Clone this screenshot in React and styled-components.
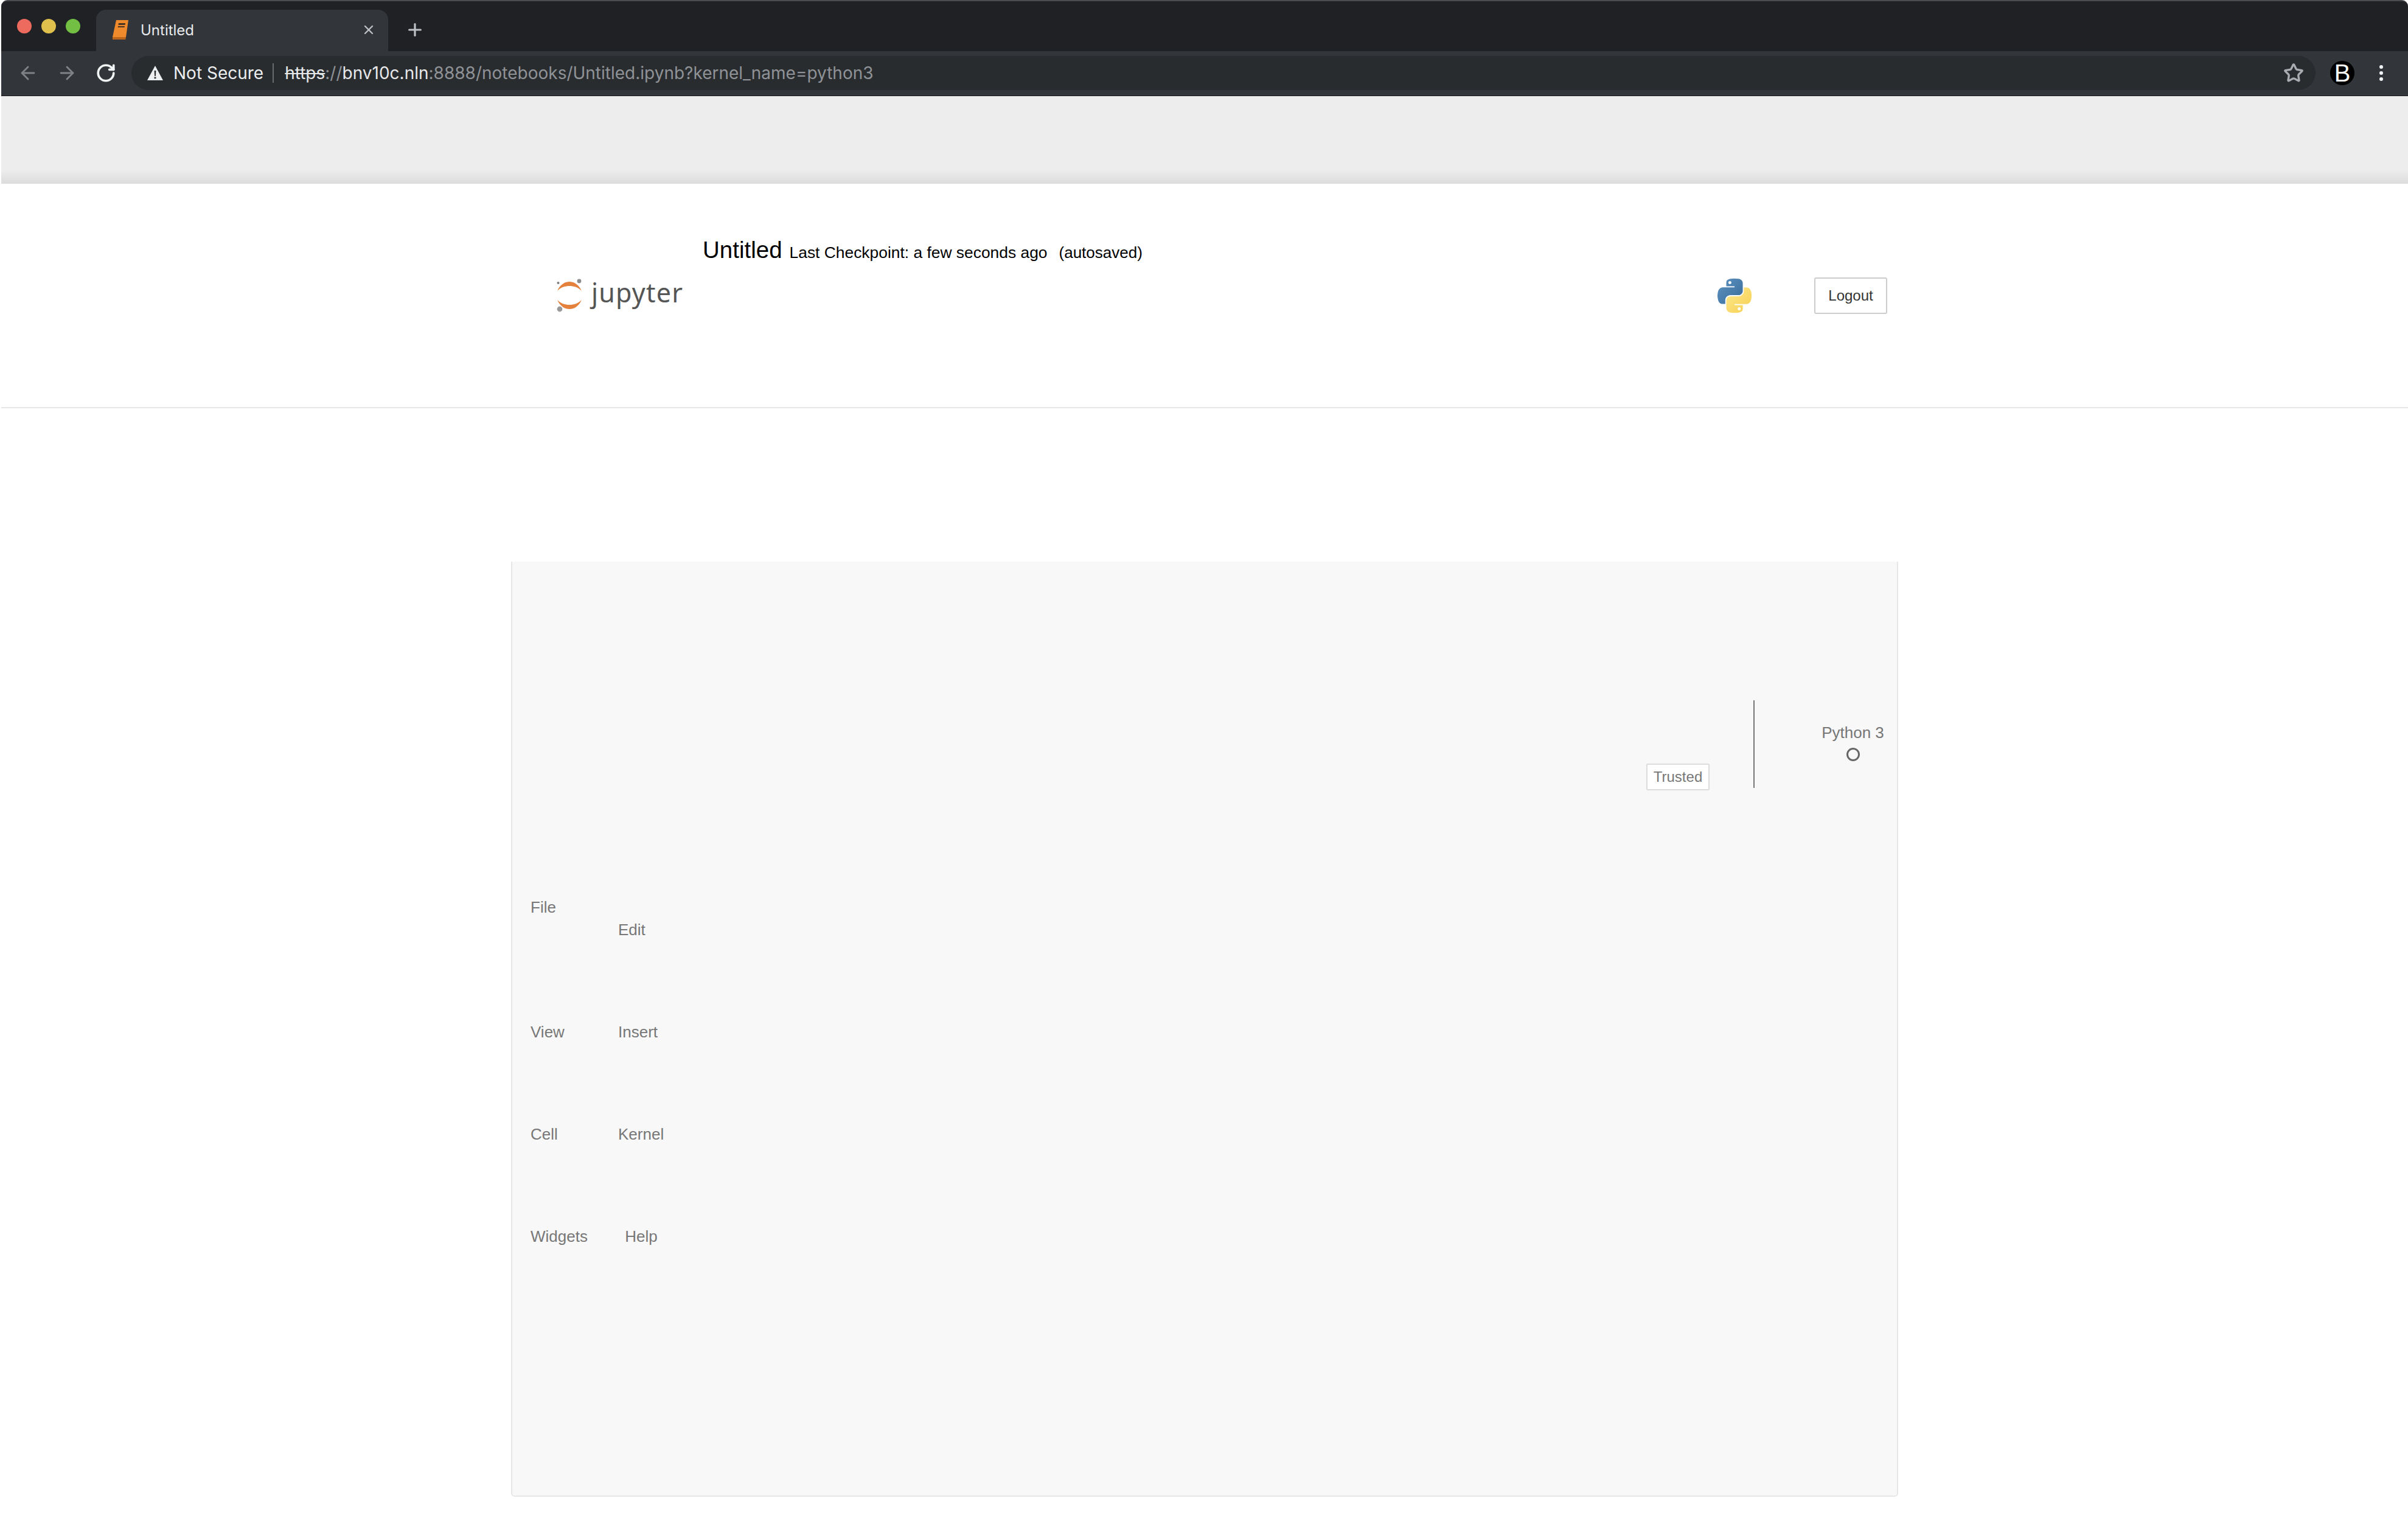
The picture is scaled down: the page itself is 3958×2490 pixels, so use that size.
import React from "react";
import styled, { createGlobalStyle } from "styled-components";
import { ArrowLeft, ArrowRight, Star, X, Plus, RotateCw } from "lucide-react";

const Global = createGlobalStyle`
  html, body { margin: 0; padding: 0; background: #fff; }
  body { font-family: "Liberation Sans", Arial, sans-serif; }
`;

const Page = styled.div`
  width: 3958px;
  height: 2490px;
  padding-left: 2px;
  box-sizing: border-box;
  background: #fff;
  overflow: hidden;
`;

const TabStrip = styled.div`
  height: 84px;
  box-sizing: border-box;
  background: #202124;
  border-top: 2px solid #4b4c4e;
  border-top-left-radius: 10px;
  border-top-right-radius: 10px;
  display: flex;
  align-items: flex-end;
  padding-left: 26px;
`;

const Lights = styled.div`
  display: flex;
  gap: 16px;
  align-self: flex-start;
  margin-top: 29px;
`;

const Light = styled.span`
  width: 24px;
  height: 24px;
  border-radius: 50%;
  background: ${(p) => p.$c};
`;

const Tab = styled.div`
  width: 480px;
  height: 68px;
  box-sizing: border-box;
  margin-left: 26px;
  background: #32363a;
  border-radius: 16px 16px 0 0;
  display: flex;
  align-items: center;
  padding: 0 20px 2px 26px;
  color: #e8eaed;
  font-family: Inter, "Liberation Sans", sans-serif;
  font-size: 24px;
`;

const TabTitle = styled.span`
  flex: 1;
  margin-left: 19px;
`;

const NewTab = styled.div`
  margin-left: 28px;
  height: 68px;
  display: flex;
  align-items: center;
  color: #bdc1c6;
  padding-bottom: 2px;
  box-sizing: border-box;
`;

const Toolbar = styled.div`
  height: 74px;
  box-sizing: border-box;
  background: #32363a;
  border-bottom: 1px solid #16171a;
  display: flex;
  align-items: center;
  padding: 0 41px 1px 27px;
`;

const NavIcons = styled.div`
  display: flex;
  align-items: center;
  gap: 30px;
`;

const NavIcon = styled.span`
  display: flex;
  color: ${(p) => p.$c};
`;

const Omnibox = styled.div`
  margin-left: 25px;
  flex: 1;
  height: 56px;
  margin-right: 24px;
  border-radius: 28px;
  background: #292c2f;
  display: flex;
  align-items: center;
  padding: 0 19px 0 26px;
  font-family: Inter, "Liberation Sans", sans-serif;
  font-size: 28px;
  color: #8f9296;
  white-space: nowrap;
`;

const NotSecure = styled.span`
  margin-left: 17px;
  color: #eceef0;
`;

const Sep = styled.span`
  width: 2px;
  height: 32px;
  background: #6a6d70;
  margin: 0 18px 0 15px;
`;

const Scheme = styled.span`
  color: #e6e8ea;
  text-decoration: line-through;
`;

const Host = styled.span`
  color: #e6e8ea;
`;

const Spacer = styled.span`
  flex: 1;
`;

const Avatar = styled.div`
  width: 40px;
  height: 40px;
  border-radius: 50%;
  background: #000;
  color: #fff;
  font-size: 40px;
  line-height: 40px;
  text-align: center;
  font-family: "Liberation Sans", sans-serif;
`;

const Dots = styled.div`
  margin-left: 41px;
  display: flex;
  flex-direction: column;
  gap: 4px;
`;

const Dot = styled.span`
  width: 6px;
  height: 6px;
  border-radius: 50%;
  background: #f1f3f4;
`;

const Banner = styled.div`
  height: 144px;
  background: linear-gradient(to bottom, #ededed 0, #ededed 84%, #dcdcdc 100%);
`;

const Header = styled.header`
  height: 369px;
  box-sizing: border-box;
  border-bottom: 2px solid #e7e7e7;
  padding: 89px 0 0 912px;
`;

const TitleRow = styled.div`
  display: flex;
  align-items: baseline;
  padding-left: 241px;
  height: 65px;
  color: #000;
  white-space: nowrap;
`;

const NotebookName = styled.span`
  font-size: 38.5px;
  line-height: 40px;
`;

const Checkpoint = styled.span`
  font-size: 26.4px;
  margin-left: 12px;
`;

const Autosaved = styled.span`
  font-size: 26px;
  margin-left: 19px;
`;

const BrandRow = styled.div`
  display: flex;
  align-items: center;
  width: 2188px;
  height: 60px;
`;

const Logo = styled.div`
  display: flex;
  align-items: center;
  flex: 1;
`;

const LogoText = styled.span`
  font-family: "Noto Sans", sans-serif;
  font-size: 43px;
  line-height: 60px;
  color: #555;
  letter-spacing: 1.2px;
  margin: 0 0 10px 14px;
`;

const LogoutButton = styled.button`
  width: 120px;
  height: 60px;
  margin-left: 103px;
  box-sizing: border-box;
  background: #fff;
  border: 2px solid #ccc;
  border-radius: 3px;
  color: #333;
  font-family: "Liberation Sans", sans-serif;
  font-size: 24px;
  padding: 0;
`;

const Main = styled.main`
  padding: 252px 0 0 838px;
`;

const Panel = styled.section`
  width: 2280px;
  height: 1537px;
  box-sizing: border-box;
  background: #f8f8f8;
  border: 2px solid #e7e7e7;
  border-top: 0;
  border-radius: 0 0 6px 6px;
  padding-top: 228px;
`;

const StatusRow = styled.div`
  display: flex;
  justify-content: flex-end;
  height: 148px;
  padding-right: 21px;
`;

const TrustedBadge = styled.div`
  align-self: flex-end;
  width: 104px;
  height: 44px;
  box-sizing: border-box;
  background: #fff;
  border: 2px solid #ddd;
  border-radius: 2px;
  color: #777;
  font-size: 24px;
  line-height: 40px;
  text-align: center;
`;

const VDivider = styled.div`
  width: 2px;
  height: 144px;
  background: #777;
  margin: 0 110px 0 72px;
`;

const Kernel = styled.div`
  display: flex;
  flex-direction: column;
  align-items: center;
  padding-top: 38px;
  color: #777;
  font-size: 26px;
  line-height: 30px;
  width: 103px;
`;

const KernelDot = styled.span`
  width: 22px;
  height: 22px;
  box-sizing: border-box;
  border: 3px solid #666;
  border-radius: 50%;
  margin-top: 10px;
`;

const Menu = styled.nav`
  display: grid;
  grid-template-columns: 144px 76px;
  grid-template-rows: 205px 168px 168px auto;
  align-items: start;
  justify-items: start;
  margin-top: 177px;
  padding-left: 30px;
`;

const MenuItem = styled.a`
  color: #777;
  font-size: 26px;
  line-height: 30px;
  margin-top: ${(p) => p.$drop || 0}px;
  justify-self: ${(p) => (p.$center ? "center" : "start")};
`;

const Python = () => (
  <svg width="56" height="58" viewBox="0 0 111 112">
    <defs>
      <linearGradient id="pb" x1="0" y1="0" x2="1" y2="1">
        <stop offset="0" stopColor="#5e94c4" />
        <stop offset="1" stopColor="#386a96" />
      </linearGradient>
      <linearGradient id="py" x1="0" y1="0" x2="1" y2="1">
        <stop offset="0" stopColor="#f6cf50" />
        <stop offset="1" stopColor="#fde98f" />
      </linearGradient>
    </defs>
    <path
      fill="url(#pb)"
      d="M54.9 0C50.3 0 46 .4 42.1 1.1 30.8 3.1 28.7 7.3 28.7 15v10.2h26.8v3.4H18.6C10.8 28.6 4 33.3 1.9 42.3c-2.5 10.2-2.6 16.6 0 27.2 1.9 7.9 6.5 13.5 14.3 13.5h9.2V70.7c0-8.8 7.7-16.6 16.8-16.6h26.8c7.4 0 13.4-6.1 13.4-13.6V15c0-7.3-6.1-12.7-13.4-13.9C64.1.3 59.4 0 54.9 0ZM40.4 8.2c2.8 0 5 2.3 5 5.1s-2.2 5-5 5-5-2.3-5-5 2.2-5.1 5-5.1Z"
    />
    <path
      fill="url(#py)"
      transform="rotate(180 55.6 56)"
      d="M54.9 0C50.3 0 46 .4 42.1 1.1 30.8 3.1 28.7 7.3 28.7 15v10.2h26.8v3.4H18.6C10.8 28.6 4 33.3 1.9 42.3c-2.5 10.2-2.6 16.6 0 27.2 1.9 7.9 6.5 13.5 14.3 13.5h9.2V70.7c0-8.8 7.7-16.6 16.8-16.6h26.8c7.4 0 13.4-6.1 13.4-13.6V15c0-7.3-6.1-12.7-13.4-13.9C64.1.3 59.4 0 54.9 0ZM40.4 8.2c2.8 0 5 2.3 5 5.1s-2.2 5-5 5-5-2.3-5-5 2.2-5.1 5-5.1Z"
    />
  </svg>
);

const JupyterMark = () => (
  <svg width="44" height="56" viewBox="0 0 44 56">
    <path fill="#e4813c" d="M2 20C7 9 15 5 22 5s15 4 20 15C36 14 29 12 22 12S8 14 2 20Z" />
    <path fill="#e4813c" d="M2 35c5 11 13 15 20 15s15-4 20-15c-6 6-13 8-20 8S8 41 2 35Z" />
    <circle cx="38" cy="4" r="3.4" fill="#8c8c8c" />
    <circle cx="3.5" cy="7" r="2" fill="#7c7c7c" />
    <circle cx="6" cy="50" r="4.4" fill="#999" />
  </svg>
);

const Notebook = () => (
  <svg width="28" height="34" viewBox="0 0 28 34">
    <path fill="#ee8a2c" d="M7 1h20l-4 28H1L7 1Z" />
    <path fill="#b9651b" d="M1 29h22l-.6 4H1z" />
    <path fill="#4a3422" d="M11 6h11l-.4 3H10.500ZM10 11h11l-.4 2H9.600Z" />
  </svg>
);

const Warning = () => (
  <svg width="26" height="24" viewBox="0 0 26 24">
    <path fill="#eceef0" d="M13 0l13 24H0L13 0Z" />
    <path fill="#292c2f" d="M11.600 8h2.800l-.5 9h-1.800zM11.600 18.500h2.800v2.800h-2.800z" />
  </svg>
);

export default function App() {
  return (
    <Page>
      <Global />
      <TabStrip>
        <Lights>
          <Light $c="#ed6a5e" />
          <Light $c="#e0c04c" />
          <Light $c="#72bf44" />
        </Lights>
        <Tab>
          <Notebook />
          <TabTitle>Untitled</TabTitle>
          <X size={24} strokeWidth={2.4} color="#bdc1c6" />
        </Tab>
        <NewTab>
          <Plus size={32} strokeWidth={2.4} />
        </NewTab>
      </TabStrip>
      <Toolbar>
        <NavIcons>
          <NavIcon $c="#7f8286"><ArrowLeft size={34} strokeWidth={2} /></NavIcon>
          <NavIcon $c="#7f8286"><ArrowRight size={34} strokeWidth={2} /></NavIcon>
          <NavIcon $c="#f1f3f4"><RotateCw size={34} strokeWidth={2.6} /></NavIcon>
        </NavIcons>
        <Omnibox>
          <Warning />
          <NotSecure>Not Secure</NotSecure>
          <Sep />
          <span>
            <Scheme>https</Scheme>://<Host>bnv10c.nln</Host>:8888/notebooks/Untitled.ipynb?kernel_name=python3
          </span>
          <Spacer />
          <NavIcon $c="#a9adb1"><Star size={34} strokeWidth={2.4} /></NavIcon>
        </Omnibox>
        <Avatar>B</Avatar>
        <Dots>
          <Dot />
          <Dot />
          <Dot />
        </Dots>
      </Toolbar>
      <Banner />
      <Header>
        <TitleRow>
          <NotebookName>Untitled</NotebookName>
          <Checkpoint>Last Checkpoint: a few seconds ago</Checkpoint>
          <Autosaved>(autosaved)</Autosaved>
        </TitleRow>
        <BrandRow>
          <Logo>
            <JupyterMark />
            <LogoText>jupyter</LogoText>
          </Logo>
          <Python />
          <LogoutButton>Logout</LogoutButton>
        </BrandRow>
      </Header>
      <Main>
        <Panel>
          <StatusRow>
            <TrustedBadge>Trusted</TrustedBadge>
            <VDivider />
            <Kernel>
              Python 3
              <KernelDot />
            </Kernel>
          </StatusRow>
          <Menu>
            <MenuItem>File</MenuItem>
            <MenuItem $drop={37}>Edit</MenuItem>
            <MenuItem>View</MenuItem>
            <MenuItem>Insert</MenuItem>
            <MenuItem>Cell</MenuItem>
            <MenuItem>Kernel</MenuItem>
            <MenuItem>Widgets</MenuItem>
            <MenuItem $center>Help</MenuItem>
          </Menu>
        </Panel>
      </Main>
    </Page>
  );
}
